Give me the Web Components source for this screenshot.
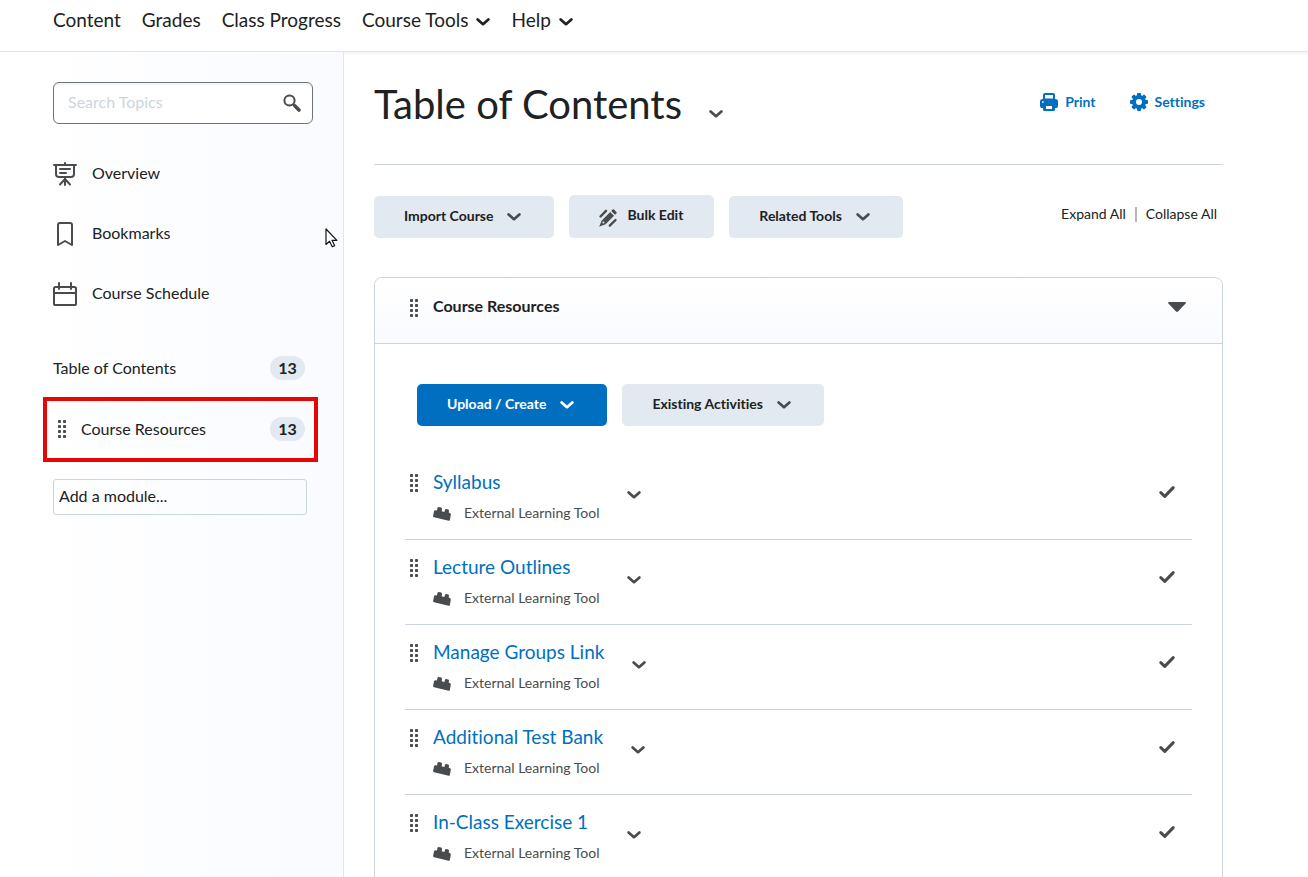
<!DOCTYPE html>
<html lang="en">
<head>
<meta charset="utf-8">
<meta name="viewport" content="width=device-width, initial-scale=1">
<title>Table of Contents</title>
<style>
  html { --ink: #202122; --icon: #494c4e; --blue: #006fbf; --line: #cdd5dc; --fill: #e3e9f1; }
  body { margin: 0; color: var(--ink); background: #fff; font: 400 16px/24px Lato, "Open Sans", sans-serif; font-variant-ligatures: none; }
</style>
</head>
<body>
<course-page>
  <nav-bar slot="nav">
    <nav-link>Content</nav-link>
    <nav-link>Grades</nav-link>
    <nav-link>Class Progress</nav-link>
    <nav-link menu>Course Tools</nav-link>
    <nav-link menu>Help</nav-link>
  </nav-bar>
  <side-bar slot="side">
    <side-link icon="overview">Overview</side-link>
    <side-link icon="bookmark">Bookmarks</side-link>
    <side-link icon="calendar">Course Schedule</side-link>
    <module-link slot="modules" count="13">Table of Contents</module-link>
    <module-link slot="modules" count="13" highlighted>Course Resources</module-link>
  </side-bar>
  <page-header>Table of Contents</page-header>
  <page-toolbar>
    <ui-button menu>Import Course</ui-button>
    <ui-button icon="pencil">Bulk Edit</ui-button>
    <ui-button menu>Related Tools</ui-button>
  </page-toolbar>
  <module-panel heading="Course Resources">
    <ui-button slot="actions" menu primary>Upload / Create</ui-button>
    <ui-button slot="actions" menu>Existing Activities</ui-button>
    <topic-item>Syllabus</topic-item>
    <topic-item>Lecture Outlines</topic-item>
    <topic-item>Manage Groups Link</topic-item>
    <topic-item>Additional Test Bank</topic-item>
    <topic-item>In-Class Exercise 1</topic-item>
  </module-panel>
</course-page>

<script>
const ICONS = {
  chevron: [14, 8, '<path d="M1.6 1.4L7 6.2L12.4 1.4" fill="none" stroke="currentColor" stroke-width="2.7" stroke-linecap="round" stroke-linejoin="round"/>'],
  grip: [8, 18, '<g fill="currentColor">' + [0, 5, 10, 15].map(y => `<rect y="${y}" width="3" height="3" rx=".8"/><rect x="5" y="${y}" width="3" height="3" rx=".8"/>`).join('') + '</g>'],
  search: [18, 18, '<circle cx="6.5" cy="6.5" r="5.1" fill="none" stroke="currentColor" stroke-width="2"/><path d="M10.2 10.2L12 12" stroke="currentColor" stroke-width="2"/><path d="M12 12L16 16" stroke="currentColor" stroke-width="3.6" stroke-linecap="round"/>'],
  overview: [24, 24, '<g fill="none" stroke="currentColor" stroke-width="2" stroke-linecap="round" stroke-linejoin="round"><path d="M1 3H23M12 1V3M3 3V12Q3 15 6 15H18Q21 15 21 12V3M7 7H17M7 11H13M12 16V23M12 17L7 22.5M12 17L17 22.5"/></g>'],
  bookmark: [24, 24, '<path d="M5 23V3Q5 1 7 1H17Q19 1 19 3V23L12 19Z" fill="none" stroke="currentColor" stroke-width="2" stroke-linejoin="round"/>'],
  calendar: [24, 24, '<g fill="none" stroke="currentColor" stroke-width="2" stroke-linecap="round"><rect x="1" y="5" width="22" height="18" rx="1.6"/><path d="M1 11H23M6 1V7M18 1V7"/></g>'],
  printer: [18, 18, '<path d="M5 1H13Q14 1 14 2V6.5H4V2Q4 1 5 1Z" fill="none" stroke="currentColor" stroke-width="2"/><path fill="currentColor" fill-rule="evenodd" d="M2.6 6H15.4Q18 6 18 8.6V12.4Q18 15 15.6 15H15V16.5Q15 18 13.5 18H4.5Q3 18 3 16.5V15H2.4Q0 15 0 12.4V8.6Q0 6 2.6 6ZM2 8.3V9.7H3.6V8.3ZM6 13V16H12V13Z"/>'],
  gear: [18, 18, '<g fill="currentColor"><path fill-rule="evenodd" d="M9 2A7 7 0 1 0 9 16A7 7 0 1 0 9 2ZM9 6A3 3 0 1 1 9 12A3 3 0 1 1 9 6Z"/>' + [0, 45, 90, 135, 180, 225, 270, 315].map(a => `<rect x="7" y="0" width="4" height="4" rx="1" transform="rotate(${a} 9 9)"/>`).join('') + '</g>'],
  pencil: [18, 18, '<g fill="currentColor"><path d="M11.2 3L15 6.8L6.6 15.2L.6 17.4Q.2 17.5 .4 17L2.8 11.4ZM12.2 2L13.6 .6Q14.3 0 15 .6L17.4 3Q18 3.7 17.4 4.4L16 5.8Z"/><path d="M1.5 7.5L7 1.8M10.8 16.6L16.5 11" stroke="currentColor" stroke-width="2.4" stroke-linecap="round"/><circle cx="4.4" cy="13.6" r="1" fill="#e3e9f1"/></g>'],
  brick: [18, 14, '<path fill="currentColor" d="M2.4 3.2L4 3.4L4.4 1Q4.800 .1 5.800 .1L8.200 .6Q9.100 1 9 2L8.700 4.300L11.400 4.900L11.900 2.900Q12.300 2 13.300 2.100L15.200 2.500Q16.100 2.900 16 3.800L15.700 5.400L17.200 6.200Q18 6.800 17.800 7.800L16.800 13.200Q16.600 14 15.700 13.800L1 10.300Q0 10 .1 9L1 4.300Q1.400 3.200 2.400 3.200Z"/>'],
  check: [16, 14, '<path d="M1.800 7.600L5.800 11.400L14.200 2.600" fill="none" stroke="currentColor" stroke-width="3" stroke-linecap="round" stroke-linejoin="round"/>'],
  caret: [18, 11, '<path d="M1 0H17Q18.600 .4 17.600 1.600L10 9.600Q9 10.500 8 9.600L.4 1.600Q-.6 .4 1 0Z" fill="currentColor"/>'],
  pointer: [13, 20, '<path d="M1 1V16.500L4.500 13.200L7.300 18.700L9.600 17.600L7 12.300H11.900Z" fill="#fff" stroke="#15151f" stroke-width="1.200" stroke-linejoin="round"/>']
};

const BASE = `
  *, *::before { box-sizing: border-box; }
  a { color: inherit; text-decoration: none; }
  button { margin: 0; padding: 0; border: 0; background: none; color: inherit; font: inherit; font-variant-ligatures: inherit; cursor: pointer; }
  h1, h2, h3 { margin: 0; font: inherit; font-variant-ligatures: inherit; }
`;

function define(name, render) {
  customElements.define(name, class extends HTMLElement {
    constructor() {
      super();
      this.attachShadow({ mode: 'open' });
    }
    connectedCallback() {
      const t = document.createElement('template');
      t.innerHTML = render(this);
      const style = document.createElement('style');
      style.textContent = BASE;
      this.shadowRoot.replaceChildren(style, t.content.cloneNode(true));
    }
  });
}

define('ui-icon', el => {
  const [w, h, body] = ICONS[el.getAttribute('name')];
  return `<style>:host { display: block; flex: none; } svg { display: block; overflow: visible; }</style>
    <svg width="${w}" height="${h}" viewBox="0 0 ${w} ${h}" aria-hidden="true">${body}</svg>`;
});

define('nav-link', el => `
  <style>
    :host { display: block; }
    a { display: flex; align-items: center; gap: 8px; }
    ui-icon { padding-top: 3px; }
  </style>
  <a href="#"><slot></slot>${el.hasAttribute('menu') ? '<ui-icon name="chevron"></ui-icon>' : ''}</a>`);

define('nav-bar', () => `
  <style>
    :host { display: block; border-bottom: 1px solid #e2e4e8; font-size: 19px; line-height: 24px; }
    nav { display: flex; gap: 21px; padding: 8px 53px 19px; }
  </style>
  <nav aria-label="Course"><slot></slot></nav>`);

define('side-link', el => `
  <style>
    :host { display: block; }
    a { display: flex; align-items: center; gap: 15px; height: 60px; }
    ui-icon { color: var(--icon); }
    span { padding-bottom: 2px; }
  </style>
  <a href="#"><ui-icon name="${el.getAttribute('icon')}"></ui-icon><span><slot></slot></span></a>`);

define('module-link', el => `
  <style>
    :host { display: block; }
    a { display: flex; align-items: center; height: 59px; padding-right: 13px; }
    ui-icon { color: var(--icon); margin-right: 15px; }
    .badge { margin-left: auto; min-width: 35px; border-radius: 12px; background: var(--fill); text-align: center; font-weight: 700; }
    :host([highlighted]) { margin-left: -10px; border: 4px solid #e80505; }
    :host([highlighted]) a { height: 57px; padding: 0 9px 2px 11px; }
  </style>
  <a href="#">${el.hasAttribute('highlighted') ? '<ui-icon name="grip"></ui-icon>' : ''}<slot></slot><span class="badge">${el.getAttribute('count')}</span></a>`);

define('side-bar', () => `
  <style>
    :host { display: block; position: relative; border-right: 1px solid #e0e5ee; padding: 30px 25px 30px 53px; background: linear-gradient(90deg, #fff 30px, #f9fbff); }
    .search { display: flex; align-items: center; height: 42px; margin: 0 5px 20px 0; padding: 0 11px 0 14px; border: 1px solid #6e7376; border-radius: 6px; background: #fff; box-shadow: inset 0 2px 0 #f3f5f8; }
    .search input { flex: 1; min-width: 0; padding: 0 0 2px; border: 0; background: none; font: inherit; color: inherit; outline: 0; }
    .search input::placeholder { color: #cdd5dc; opacity: 1; }
    .search button { color: var(--icon); }
    .modules { padding-top: 14px; }
    .add { display: block; width: calc(100% - 11px); height: 36px; margin-top: 17px; padding: 0 5px 3px; border: 1px solid var(--line); border-radius: 3px; background: transparent; font: inherit; color: inherit; }
    .add::placeholder { color: var(--ink); opacity: 1; }
    .pointer { position: absolute; left: 325px; top: 176px; }
  </style>
  <form class="search" role="search">
    <input type="text" placeholder="Search Topics" aria-label="Search Topics">
    <button type="button" aria-label="Search"><ui-icon name="search"></ui-icon></button>
  </form>
  <slot></slot>
  <div class="modules"><slot name="modules"></slot></div>
  <input class="add" type="text" placeholder="Add a module..." aria-label="Add a module">
  <ui-icon class="pointer" name="pointer"></ui-icon>`);

define('ui-button', el => `
  <style>
    :host { display: block; }
    button { display: flex; align-items: center; gap: 14px; height: 42px; padding: 0 33px 0 30px; border-radius: 5px; background: var(--fill); font-size: 14px; line-height: 20px; font-weight: 700; white-space: nowrap; }
    span { padding-bottom: 2px; }
    ui-icon { color: var(--icon); }
    :host([icon]) button { gap: 10px; height: 43px; padding: 0 31px 0 30px; }
    :host([icon]) span { padding-bottom: 3px; }
    :host([icon]) ui-icon { padding-top: 2px; }
    :host([primary]) button { background: var(--blue); color: #fff; }
    :host([primary]) ui-icon { color: #fff; }
  </style>
  <button type="button">${el.hasAttribute('icon') ? `<ui-icon name="${el.getAttribute('icon')}"></ui-icon>` : ''}<span><slot></slot></span>${el.hasAttribute('menu') ? '<ui-icon name="chevron"></ui-icon>' : ''}</button>`);

define('page-header', () => `
  <style>
    :host { display: flex; align-items: center; justify-content: space-between; height: 113px; padding-bottom: 8px; border-bottom: 1px solid var(--line); box-sizing: border-box; }
    .title { display: flex; align-items: center; gap: 27px; }
    h1 { font-size: 40px; line-height: 48px; }
    .title ui-icon { color: var(--icon); padding-top: 20px; }
    .actions { display: flex; gap: 34px; padding: 0 18px 4px 0; color: var(--blue); font-size: 14px; line-height: 20px; font-weight: 700; }
    .actions a { display: flex; align-items: center; gap: 7px; }
  </style>
  <div class="title"><h1><slot></slot></h1><button type="button" aria-label="Page actions"><ui-icon name="chevron"></ui-icon></button></div>
  <div class="actions">
    <a href="#"><ui-icon name="printer"></ui-icon>Print</a>
    <a href="#"><ui-icon name="gear"></ui-icon>Settings</a>
  </div>`);

define('page-toolbar', () => `
  <style>
    :host { display: flex; justify-content: space-between; padding: 30px 0 39px; }
    .buttons { display: flex; align-items: flex-end; gap: 15px; }
    .expand { display: flex; align-items: center; gap: 9px; height: 38px; padding-right: 6px; font-size: 14px; line-height: 20px; }
    .rule { width: 2px; height: 15px; background: #b1b9be; }
  </style>
  <div class="buttons"><slot></slot></div>
  <div class="expand"><a href="#">Expand All</a><span class="rule"></span><a href="#">Collapse All</a></div>`);

define('module-panel', el => `
  <style>
    :host { display: block; border: 1px solid var(--line); border-radius: 8px; }
    header { display: flex; align-items: center; height: 66px; padding: 0 36px 6px 35px; border-bottom: 1px solid var(--line); border-radius: 8px 8px 0 0; background: linear-gradient(#fff, #f9fbff); color: var(--icon); }
    h2 { flex: 1; margin-left: 15px; padding-bottom: 3px; color: var(--ink); font-weight: 700; }
    .body { padding: 40px 30px; }
    .actions { display: flex; gap: 15px; padding: 0 12px 29px; }
  </style>
  <header>
    <ui-icon name="grip"></ui-icon>
    <h2>${el.getAttribute('heading')}</h2>
    <button type="button" aria-label="Collapse module"><ui-icon name="caret"></ui-icon></button>
  </header>
  <div class="body">
    <div class="actions"><slot name="actions"></slot></div>
    <slot></slot>
  </div>`);

define('topic-item', () => `
  <style>
    :host { display: flex; align-items: flex-start; padding: 11px 17px 11px 5px; border-bottom: 1px solid var(--line); color: var(--icon); }
    .grip { margin-top: 8px; }
    .text { margin: 0 28px 0 15px; }
    h3 { font-size: 19px; line-height: 31px; color: var(--blue); }
    .kind { display: flex; align-items: center; gap: 13px; font-size: 14px; line-height: 31px; }
    .kind ui-icon { padding-top: 2px; }
    .more { margin-top: 25px; }
    .done { margin: 19px 0 0 auto; }
  </style>
  <ui-icon class="grip" name="grip"></ui-icon>
  <div class="text">
    <h3><a href="#"><slot></slot></a></h3>
    <div class="kind"><ui-icon name="brick"></ui-icon><span>External Learning Tool</span></div>
  </div>
  <button class="more" type="button" aria-label="Topic actions"><ui-icon name="chevron"></ui-icon></button>
  <ui-icon class="done" name="check"></ui-icon>`);

define('course-page', () => `
  <style>
    :host { display: flex; flex-direction: column; height: 100vh; overflow: hidden; }
    .columns { display: flex; flex: 1; min-height: 0; box-shadow: inset 0 4px 3px -2px #f2f3f5; }
    aside { display: grid; flex: 0 0 344px; }
    main { flex: 1; min-width: 0; padding: 0 85px 30px 30px; overflow: auto; scrollbar-width: none; }
  </style>
  <slot name="nav"></slot>
  <div class="columns">
    <aside><slot name="side"></slot></aside>
    <main><slot></slot></main>
  </div>`);
</script>
</body>
</html>
